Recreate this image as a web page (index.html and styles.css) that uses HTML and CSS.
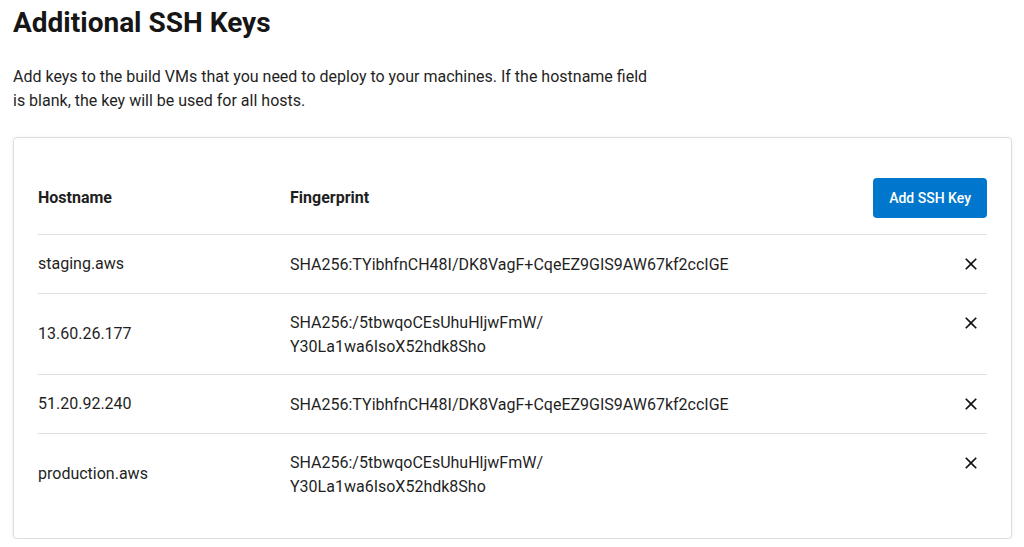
FILE: index.html
```html
<!DOCTYPE html>
<html lang="en">
<head>
<meta charset="utf-8">
<title>Additional SSH Keys</title>
<link rel="stylesheet" href="styles.css">
</head>
<body>
<main class="page">
  <h1 class="title">Additional SSH Keys</h1>
  <p class="intro">Add keys to the build VMs that you need to deploy to your machines. If the hostname field is blank, the key will be used for all hosts.</p>
  <section class="card">
    <div class="keys">
      <div class="row head">
        <div class="cell host">Hostname</div>
        <div class="cell fp">Fingerprint</div>
        <div class="cell act"><button class="add-btn" type="button">Add SSH Key</button></div>
      </div>
      <div class="row">
        <div class="cell host">staging.aws</div>
        <div class="cell fp">SHA256:TYibhfnCH48I/DK8VagF+CqeEZ9GIS9AW67kf2ccIGE</div>
        <div class="cell act"><button class="del-btn" type="button" aria-label="Remove"><svg viewBox="0 0 24 24" width="20" height="20"><path d="M19 6.41L17.59 5 12 10.59 6.41 5 5 6.41 10.59 12 5 17.59 6.41 19 12 13.41 17.59 19 19 17.59 13.41 12z"/></svg></button></div>
      </div>
      <div class="row">
        <div class="cell host">13.60.26.177</div>
        <div class="cell fp">SHA256:/5tbwqoCEsUhuHljwFmW/<wbr>Y30La1wa6IsoX52hdk8Sho</div>
        <div class="cell act"><button class="del-btn" type="button" aria-label="Remove"><svg viewBox="0 0 24 24" width="20" height="20"><path d="M19 6.41L17.59 5 12 10.59 6.41 5 5 6.41 10.59 12 5 17.59 6.41 19 12 13.41 17.59 19 19 17.59 13.41 12z"/></svg></button></div>
      </div>
      <div class="row">
        <div class="cell host">51.20.92.240</div>
        <div class="cell fp">SHA256:TYibhfnCH48I/DK8VagF+CqeEZ9GIS9AW67kf2ccIGE</div>
        <div class="cell act"><button class="del-btn" type="button" aria-label="Remove"><svg viewBox="0 0 24 24" width="20" height="20"><path d="M19 6.41L17.59 5 12 10.59 6.41 5 5 6.41 10.59 12 5 17.59 6.41 19 12 13.41 17.59 19 19 17.59 13.41 12z"/></svg></button></div>
      </div>
      <div class="row last">
        <div class="cell host">production.aws</div>
        <div class="cell fp">SHA256:/5tbwqoCEsUhuHljwFmW/<wbr>Y30La1wa6IsoX52hdk8Sho</div>
        <div class="cell act"><button class="del-btn" type="button" aria-label="Remove"><svg viewBox="0 0 24 24" width="20" height="20"><path d="M19 6.41L17.59 5 12 10.59 6.41 5 5 6.41 10.59 12 5 17.59 6.41 19 12 13.41 17.59 19 19 17.59 13.41 12z"/></svg></button></div>
      </div>
    </div>
  </section>
</main>
</body>
</html>
```

FILE: styles.css
```css
* { box-sizing: border-box; }

html, body {
  margin: 0;
  padding: 0;
  background: #ffffff;
}

body {
  font-family: Roboto, "Liberation Sans", Arial, sans-serif;
  color: #1f1f1f;
  font-size: 16px;
  line-height: 24px;
}

.page {
  padding: 5px 12px 0 13px;
}

.title {
  margin: 0;
  font-size: 28px;
  line-height: 36px;
  font-weight: 700;
  color: #161616;
}

.intro {
  margin: 24px 0 24px 0;
  max-width: 645px;
  font-size: 16px;
  line-height: 24px;
}

.card {
  border: 1px solid #dedede;
  border-radius: 4px;
  box-shadow: 0 1px 5px rgba(0, 0, 0, 0.07);
  padding: 24px;
  background: #fff;
}

.keys {
  display: flex;
  flex-direction: column;
}

.row {
  display: grid;
  grid-template-columns: 252px 442px 1fr;
  padding: 16px 0;
  border-bottom: 1px solid #e0e0e0;
  align-items: center;
}

.row.last {
  border-bottom: none;
}

.head .cell {
  font-weight: 700;
}

.cell.fp {
  min-width: 0;
  padding-top: 1px;
  margin-bottom: -1px;
}

.row.head .cell.fp {
  padding-top: 0;
  margin-bottom: 0;
}

.cell.act {
  display: flex;
  justify-content: flex-end;
  align-self: start;
}

.row.head .cell.act {
  align-self: center;
}

.add-btn {
  height: 40px;
  padding: 0 16px;
  border: none;
  border-radius: 4px;
  background: #0077cc;
  color: #ffffff;
  font-family: Roboto, "Liberation Sans", Arial, sans-serif;
  font-size: 14px;
  font-weight: 500;
  line-height: 40px;
  cursor: pointer;
}

.del-btn {
  width: 32px;
  height: 26px;
  padding: 0;
  border: none;
  background: transparent;
  display: flex;
  align-items: center;
  justify-content: center;
  cursor: pointer;
}

.del-btn svg {
  fill: #111111;
  display: block;
}
```
